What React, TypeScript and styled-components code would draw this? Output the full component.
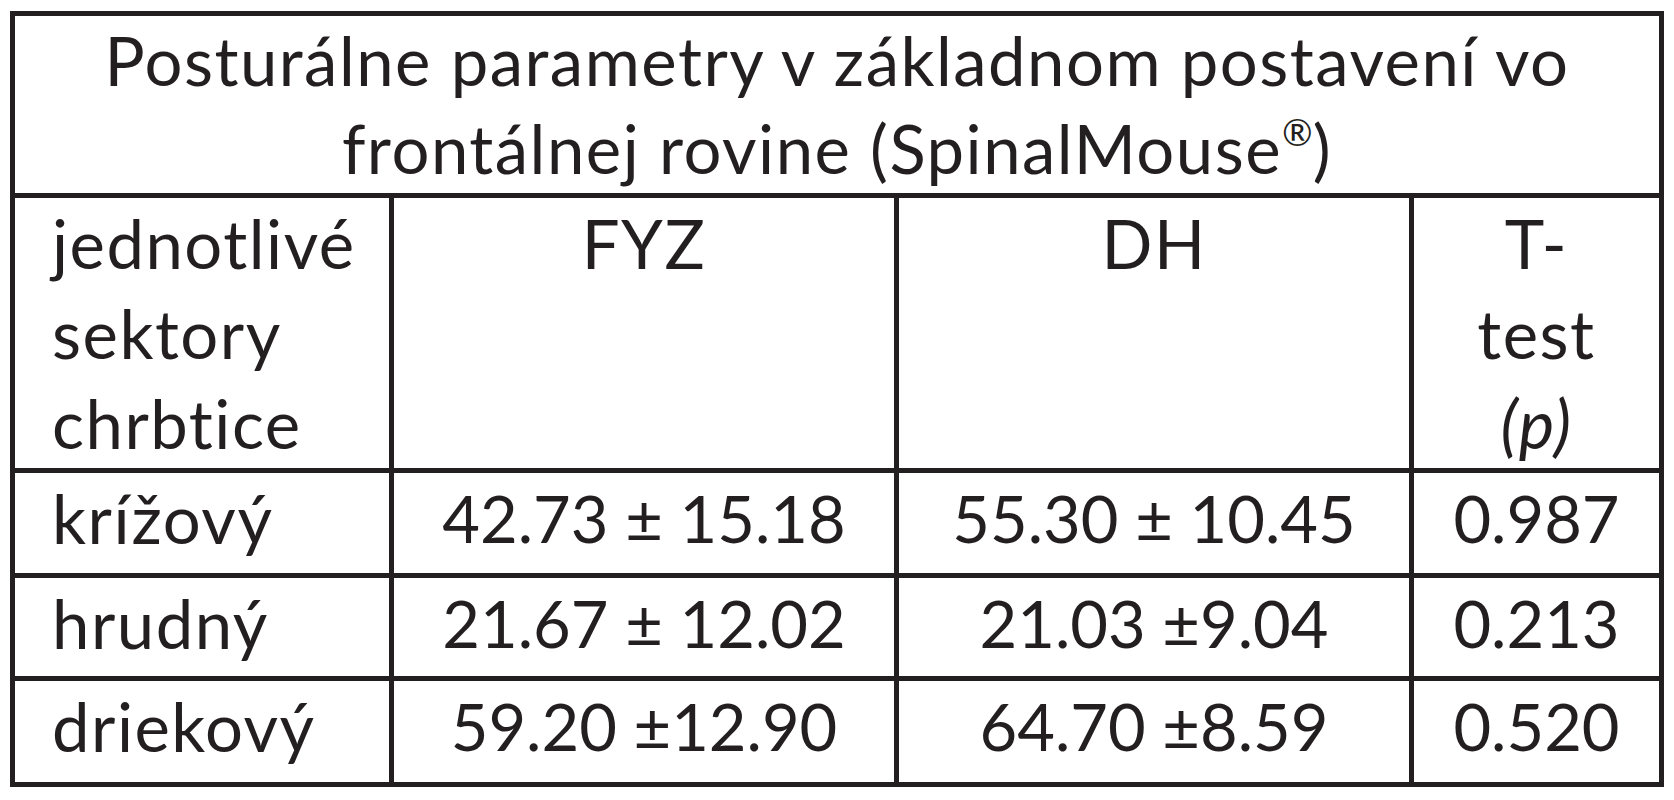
import React, { FC } from 'react';
import styled, { createGlobalStyle } from 'styled-components';

const GlobalStyle = createGlobalStyle`
    html, body {
        margin: 0;
        padding: 0;
        background: #ffffff;
    }
    body {
        font-family: Lato, 'Open Sans', sans-serif;
        color: #231f20;
    }
`;

const Page = styled.div`
    padding: 11px 10px;
    width: 1674px;
    box-sizing: border-box;
`;

const Table = styled.div`
    display: grid;
    grid-template-columns: 374px 500px 510px 245px;
    grid-template-rows: 177px 270px 100px 98px 101px;
    gap: 5px;
    padding: 5px;
    width: 1654px;
    box-sizing: border-box;
    background: #231f20;
`;

const Cell = styled.div<{ $align?: 'left' | 'center'; $words?: boolean }>`
    background: #ffffff;
    font-size: ${({ $words }) => ($words ? '67px' : '65px')};
    letter-spacing: ${({ $words }) => ($words ? '1.5px' : '0')};
    line-height: 90px;
    text-align: ${({ $align }) => ($align === 'left' ? 'left' : 'center')};
    padding-left: ${({ $align }) => ($align === 'left' ? '37px' : '0')};
    overflow: hidden;
    white-space: nowrap;
`;

const TitleCell = styled(Cell)`
    grid-column: 1 / span 4;
    line-height: 88px;
    letter-spacing: 1.5px;
`;

const Line = styled.div``;

const Reg = styled.sup`
    font-size: 0.55em;
    line-height: 0;
    letter-spacing: 0;
    vertical-align: 0.75em;
`;

const Italic = styled.span`
    font-style: italic;
`;

const rows = [
    { name: 'krížový', fyz: '42.73 ± 15.18', dh: '55.30 ± 10.45', p: '0.987' },
    { name: 'hrudný', fyz: '21.67 ± 12.02', dh: '21.03 ±9.04', p: '0.213' },
    { name: 'driekový', fyz: '59.20 ±12.90', dh: '64.70 ±8.59', p: '0.520' },
];

const App: FC = () => {
    return (
        <Page>
            <GlobalStyle />
            <Table>
                <TitleCell $words>
                    <Line>Posturálne parametry v základnom postavení vo</Line>
                    <Line>
                        frontálnej rovine (SpinalMouse<Reg>®</Reg>)
                    </Line>
                </TitleCell>

                <Cell $align="left" $words>
                    <Line>jednotlivé</Line>
                    <Line>sektory</Line>
                    <Line>chrbtice</Line>
                </Cell>
                <Cell $words>FYZ</Cell>
                <Cell $words>DH</Cell>
                <Cell $words>
                    <Line>T-</Line>
                    <Line>test</Line>
                    <Line>
                        <Italic>(p)</Italic>
                    </Line>
                </Cell>

                {rows.map(({ name, fyz, dh, p }) => (
                    <React.Fragment key={name}>
                        <Cell $align="left" $words>
                            {name}
                        </Cell>
                        <Cell>{fyz}</Cell>
                        <Cell>{dh}</Cell>
                        <Cell>{p}</Cell>
                    </React.Fragment>
                ))}
            </Table>
        </Page>
    );
};

export default App;
